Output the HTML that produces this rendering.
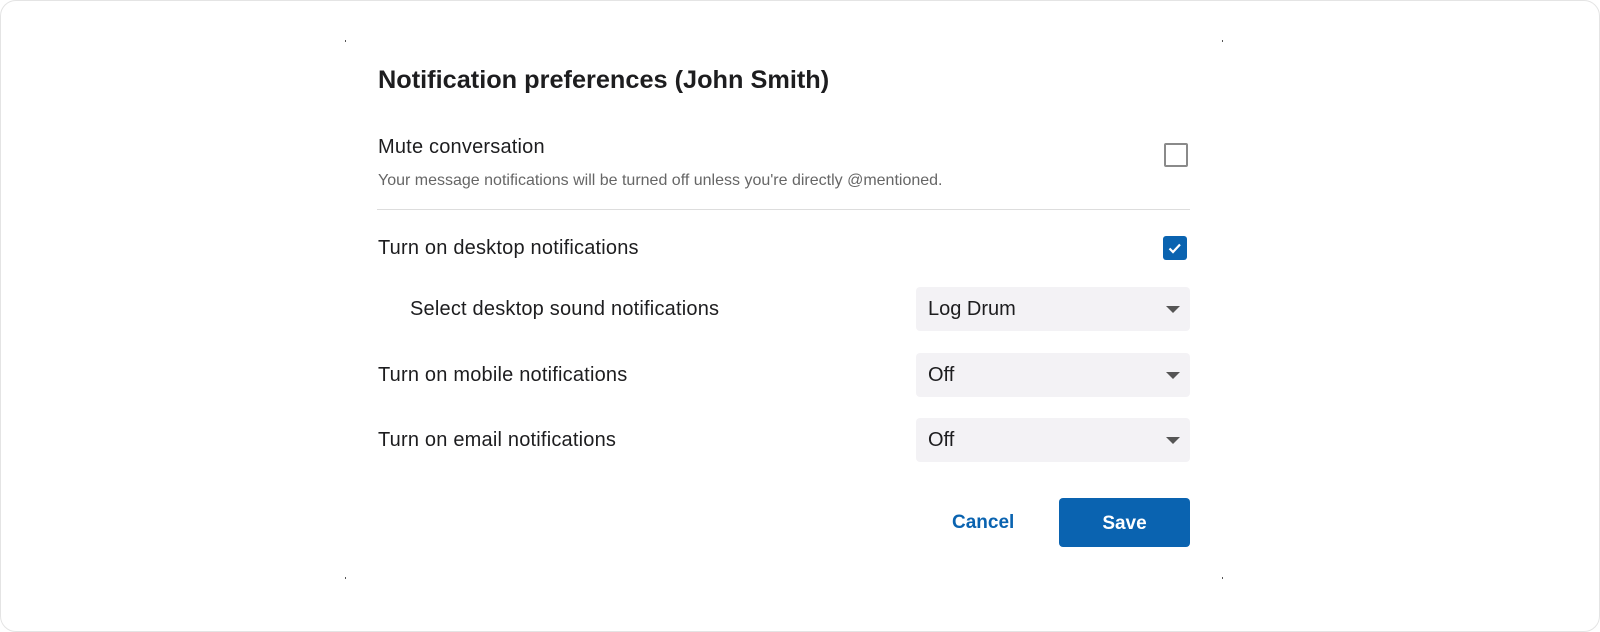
<!DOCTYPE html>
<html><head><style>
html,body{margin:0;padding:0;background:#fff;}
body{width:1600px;height:632px;position:relative;overflow:hidden;font-family:"Liberation Sans",sans-serif;color:#1d1d1f;}
.frame{position:absolute;left:0;top:0;width:1598px;height:630px;border:1px solid #e4e4e4;border-radius:16px;}
.a{position:absolute;white-space:nowrap;}
.lbl{font-size:20px;letter-spacing:0.2px;}
.dd{position:absolute;left:916px;width:274px;height:44px;background:#f3f2f5;border-radius:4px;}
.dd span{position:absolute;left:12px;top:11px;font-size:20px;}
.dd i{position:absolute;right:10px;top:19px;width:0;height:0;border-left:7px solid transparent;border-right:7px solid transparent;border-top:7px solid #555;}
.dot{position:absolute;width:1px;height:2px;background:#555;}
</style></head><body>
<div class="frame"></div>
<div class="dot" style="left:345px;top:40px"></div>
<div class="dot" style="left:1222px;top:40px"></div>
<div class="dot" style="left:345px;top:577px"></div>
<div class="dot" style="left:1222px;top:577px"></div>
<div class="a" style="left:378px;top:66px;font-size:25.3px;font-weight:bold;">Notification preferences (John Smith)</div>
<div class="a lbl" style="left:378px;top:136px;">Mute conversation</div>
<div class="a" style="left:378px;top:172px;font-size:16px;color:#666;">Your message notifications will be turned off unless you're directly @mentioned.</div>
<div style="position:absolute;left:1164px;top:143px;width:20px;height:20px;border:2px solid #8a8a8a;border-radius:2px;"></div>
<div style="position:absolute;left:377px;top:209px;width:813px;height:1px;background:#ddd;"></div>
<div class="a lbl" style="left:378px;top:237px;">Turn on desktop notifications</div>
<div style="position:absolute;left:1163px;top:236px;width:24px;height:24px;background:#0a63b0;border-radius:3px;">
<svg width="24" height="24" viewBox="0 0 24 24"><path d="M6.5 12.5l3.5 3.5 7-7.5" fill="none" stroke="#fff" stroke-width="2.2"/></svg></div>
<div class="a lbl" style="left:410px;top:298px;">Select desktop sound notifications</div>
<div class="dd" style="top:287px"><span>Log Drum</span><i></i></div>
<div class="a lbl" style="left:378px;top:364px;">Turn on mobile notifications</div>
<div class="dd" style="top:353px"><span>Off</span><i></i></div>
<div class="a lbl" style="left:378px;top:429px;">Turn on email notifications</div>
<div class="dd" style="top:418px"><span>Off</span><i></i></div>
<div class="a" style="left:952px;top:512px;font-size:19px;font-weight:bold;color:#0a63b0;">Cancel</div>
<div style="position:absolute;left:1059px;top:498px;width:131px;height:49px;background:#0a63b0;border-radius:4px;color:#fff;font-size:19px;font-weight:bold;text-align:center;line-height:51px;">Save</div>
</body></html>
